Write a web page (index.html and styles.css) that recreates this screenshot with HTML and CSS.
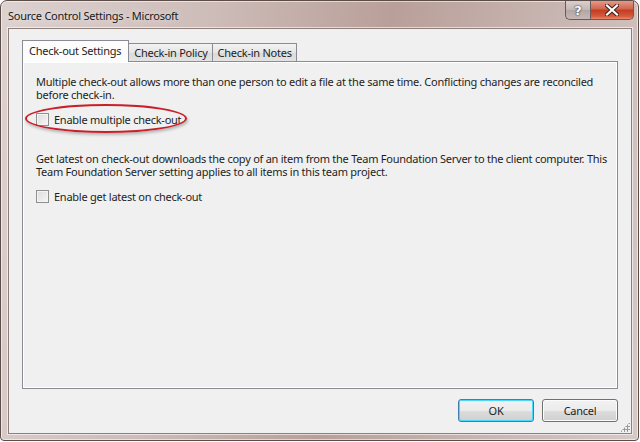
FILE: index.html
```html
<!DOCTYPE html>
<html>
<head>
<meta charset="utf-8">
<link rel="stylesheet" href="styles.css">
</head>
<body>
<div class="frame">
  <div class="titlebar">
    <span class="title">Source Control Settings - Microsoft</span>
    <div class="caption-buttons">
      <div class="cap help">?</div>
      <div class="cap close">
        <svg width="14" height="12" viewBox="0 0 14 12"><path d="M2 1.5 L12 10.5 M12 1.5 L2 10.5" stroke="#3b1d18" stroke-width="4" stroke-linecap="square"/><path d="M2 1.5 L12 10.5 M12 1.5 L2 10.5" stroke="#fff" stroke-width="2.2" stroke-linecap="square"/></svg>
      </div>
    </div>
  </div>
  <div class="client">
    <div class="tabs">
      <div class="tab active">Check-out Settings</div>
      <div class="tab">Check-in Policy</div>
      <div class="tab">Check-in Notes</div>
    </div>
    <div class="panel">
      <p class="desc">Multiple check-out allows more than one person to edit a file at the same time. Conflicting changes are reconciled before check-in.</p>
      <div class="check highlighted"><span class="box"></span><span>Enable multiple check-out</span><span class="ring"></span></div>
      <p class="desc second">Get latest on check-out downloads the copy of an item from the Team Foundation Server to the client computer. This Team Foundation Server setting applies to all items in this team project.</p>
      <div class="check"><span class="box"></span><span>Enable get latest on check-out</span></div>
    </div>
    <div class="buttons">
      <div class="btn default">OK</div>
      <div class="btn">Cancel</div>
    </div>
    <div class="grip"></div>
  </div>
</div>
</body>
</html>
```
FILE: styles.css
```css
html, body {
  margin: 0;
  padding: 0;
  background: #ffffff;
}
body {
  width: 640px;
  height: 442px;
  overflow: hidden;
  font-family: "Noto Sans", sans-serif;
  font-size: 11px;
  letter-spacing: -0.25px;
  color: #1e1e1e;
}
.frame {
  box-sizing: border-box;
  width: 639px;
  height: 441px;
  border: 1px solid #5d4d49;
  border-radius: 7px 7px 4px 4px;
  background: linear-gradient(100deg, #dcd2d0 0%, #cdbcb8 30%, #b99f99 55%, #c9b7b3 80%, #d6c9c6 100%);
  box-shadow: inset 0 0 0 1px rgba(255,255,255,0.55);
  padding: 0 6px 6px 7px;
  display: flex;
  flex-direction: column;
}
.titlebar {
  height: 27px;
  display: flex;
  align-items: flex-start;
  justify-content: space-between;
}
.title {
  margin-top: 7px;
  color: #1a1a1a;
  text-shadow: 0 0 6px rgba(255,255,255,0.8);
}
.caption-buttons {
  display: flex;
  margin-right: -2px;
}
.cap {
  height: 18px;
  border: 1px solid #6c5854;
  border-top: none;
  display: flex;
  align-items: center;
  justify-content: center;
}
.help {
  width: 24px;
  border-radius: 0 0 0 5px;
  border-right: none;
  background: linear-gradient(#d8d0cf, #c3b7b5 50%, #b3a5a2 51%, #c5b9b7);
  font-family: "DejaVu Sans", sans-serif;
  font-weight: bold;
  font-size: 13px;
  letter-spacing: 0;
  color: #fff;
  text-shadow: 0 0 1px #333, 0 0 2px #333;
}
.close {
  width: 42px;
  border-radius: 0 0 5px 0;
  background: linear-gradient(#e49a88, #d1644c 45%, #c23c22 50%, #d65a3c 85%, #e88a6e);
}
.client {
  flex: 1;
  background: #f0f0f0;
  border: 1px solid #8f7f7b;
  box-shadow: 0 0 0 1px rgba(255,255,255,0.6);
  padding: 12px 13px 11px 13px;
  display: flex;
  flex-direction: column;
  position: relative;
}
.tabs {
  display: flex;
  align-items: flex-end;
  height: 20px;
  position: relative;
  z-index: 1;
}
.tab {
  height: 17px;
  padding: 0 4px 0 5px;
  border: 1px solid #898c95;
  border-bottom: none;
  margin-right: -1px;
  background: linear-gradient(#f2f2f2, #e6e6e6 50%, #d9d9d9 51%, #e3e3e3);
  line-height: 17px;
}
.tab.active {
  padding: 0 7px 0 6px;
  background: #fcfcfc;
  margin-bottom: -1px;
  height: 21px;
  line-height: 19px;
}
.panel {
  flex: 1;
  border: 1px solid #898c95;
  background: #f0f0f0;
  box-shadow: inset 0 0 0 1px #ffffff;
  padding: 13px 8px 13px 13px;
}
.desc {
  margin: 0;
  line-height: 13px;
}
.desc.second {
  margin-top: 25px;
}
.check {
  display: flex;
  align-items: center;
  height: 16px;
  margin-top: 10px;
  position: relative;
}
.box {
  width: 11px;
  height: 11px;
  border: 1px solid #8e8f8f;
  background: linear-gradient(135deg, #dcdcdc, #f6f6f6);
  box-shadow: inset 0 0 0 1px #f4f4f4;
  margin-right: 5px;
}
.ring {
  position: absolute;
  box-sizing: border-box;
  left: -11px;
  top: -7px;
  width: 162px;
  height: 29px;
  border: 2px solid #c8202a;
  border-radius: 50%;
  box-shadow: 1px 2px 3px rgba(0,0,0,0.25);
}
.buttons {
  display: flex;
  justify-content: flex-end;
  gap: 8px;
  margin-top: 10px;
}
.btn {
  box-sizing: border-box;
  width: 76px;
  height: 23px;
  border: 1px solid #707070;
  border-radius: 3px;
  background: linear-gradient(#f2f2f2, #ebebeb 50%, #dddddd 51%, #cfcfcf);
  box-shadow: inset 0 0 0 1px #fcfcfc;
  text-align: center;
  line-height: 21px;
}
.btn.default {
  border-color: #3c7fb1;
  box-shadow: inset 0 0 0 1px #48d8fb;
}
.grip {
  position: absolute;
  right: 1px;
  bottom: 1px;
  width: 10px;
  height: 10px;
  background:
    radial-gradient(circle, #9a9a9a 1px, transparent 1.2px) 0 0 / 3px 3px;
  clip-path: polygon(100% 0, 100% 100%, 0 100%);
}
```
